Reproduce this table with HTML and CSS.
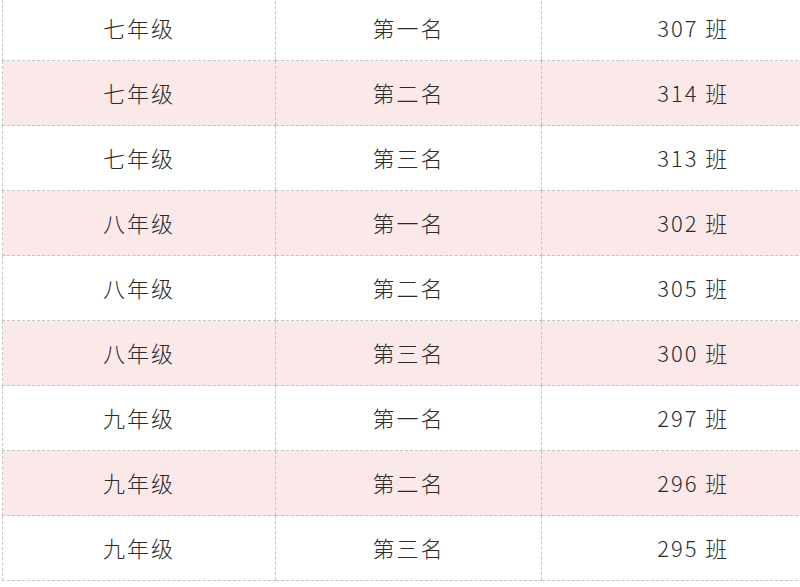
FILE: index.html
```html
<!DOCTYPE html>
<html lang="zh">
<head>
<meta charset="utf-8">
<link rel="stylesheet" href="styles.css">
</head>
<body>
<table class="rank">
  <colgroup><col class="c1"><col class="c2"><col class="c3"></colgroup>
  <tbody>
    <tr><td>七年级</td><td>第一名</td><td class="cls">307 班</td></tr>
    <tr class="pink"><td>七年级</td><td>第二名</td><td class="cls">314 班</td></tr>
    <tr><td>七年级</td><td>第三名</td><td class="cls">313 班</td></tr>
    <tr class="pink"><td>八年级</td><td>第一名</td><td class="cls">302 班</td></tr>
    <tr><td>八年级</td><td>第二名</td><td class="cls">305 班</td></tr>
    <tr class="pink"><td>八年级</td><td>第三名</td><td class="cls">300 班</td></tr>
    <tr><td>九年级</td><td>第一名</td><td class="cls">297 班</td></tr>
    <tr class="pink"><td>九年级</td><td>第二名</td><td class="cls">296 班</td></tr>
    <tr><td>九年级</td><td>第三名</td><td class="cls">295 班</td></tr>
  </tbody>
</table>
</body>
</html>
```
FILE: styles.css
```css
html, body {
  margin: 0;
  padding: 0;
  background: #ffffff;
  overflow: hidden;
}
body {
  width: 800px;
  height: 587px;
}
.rank {
  border-collapse: collapse;
  margin: -5px 0 0 2px;
  table-layout: fixed;
  width: 800px;
  font-family: "Noto Sans CJK SC", "Noto Sans", sans-serif;
  font-size: 22px;
  font-weight: 300;
  color: #2b2b2b;
}
.c1 { width: 273px; }
.c2 { width: 266px; }
.c3 { width: 261px; }
.rank td {
  height: 61px;
  padding: 0 0 3px 0;
  text-align: center;
  vertical-align: middle;
  letter-spacing: 2px;
  border: 1px dashed #c4c4c4;
  border-right: none;
  line-height: 1;
}
.rank td:first-child {
  border-left: 1px dashed #c4c4c4;
}
.rank td.cls {
  padding-left: 42px;
}
.rank tr.pink td {
  background: #fbe8e8;
}
```
